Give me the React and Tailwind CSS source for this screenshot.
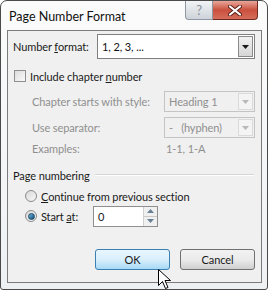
import React from "react";

function Arrow({ disabled }) {
  return (
    <svg width="7" height="4" viewBox="0 0 7 4">
      <path d="M0 0 H7 L3.5 4 Z" fill={disabled ? "#b8b8b8" : "#1a1a1a"} />
    </svg>
  );
}

function Combo({ value, disabled, className }) {
  return (
    <div
      className={
        "flex items-stretch border " +
        (disabled ? "border-[#c4c4c4] bg-[#f0f0f0] text-[#8f8f8f] " : "border-[#7f7f7f] bg-white text-[#111] ") +
        className
      }
    >
      <div className="flex-1 flex items-center pl-[4px] whitespace-nowrap">{value}</div>
      <div
        className={
          "w-[15px] my-[1px] mr-[1px] flex items-center justify-center border " +
          (disabled
            ? "border-[#dadada] bg-[#f4f4f4]"
            : "border-[#8a8a8a] bg-gradient-to-b from-[#f2f2f2] to-[#d5d5d5]")
        }
      >
        <Arrow disabled={disabled} />
      </div>
    </div>
  );
}

function Radio({ checked }) {
  return (
    <div className="w-[12px] h-[12px] shrink-0 rounded-full border border-[#8a8a8a] bg-gradient-to-br from-[#d8d8d8] to-[#f8f8f8] flex items-center justify-center">
      {checked && (
        <div className="w-[7px] h-[7px] rounded-full bg-gradient-to-br from-[#6fb6e0] to-[#0d4d74] border border-[#1a4a66]" />
      )}
    </div>
  );
}

export default function App() {
  return (
    <div
      className="w-[268px] h-[290px] relative overflow-hidden bg-white text-[11px] tracking-[-0.1px] leading-none whitespace-nowrap"
      style={{ fontFamily: 'Lato, "Noto Sans", sans-serif' }}
    >
      <div className="w-[268px] h-[290px] border border-[#4a4a4a] rounded-t-[7px] rounded-b-[3px] bg-gradient-to-b from-[#fbfbfb] to-[#eef1f4] flex flex-col pl-[6px] pr-[5px] pb-[6px]">
        {/* title bar */}
        <div className="h-[29px] flex items-start shrink-0">
          <div className="pt-[10px] pl-[2px] text-[12.5px] tracking-normal text-[#111]">Page Number Format</div>
          <div className="ml-auto mr-[4px] flex h-[19px]">
            <div className="w-[28px] h-[19px] border border-t-0 border-[#8d98a3] rounded-bl-[4px] bg-gradient-to-b from-[#f2f4f6] to-[#cdd3d9] flex items-center justify-center text-[#8a8f95] text-[13px]">
              ?
            </div>
            <div className="w-[45px] h-[19px] border border-t-0 border-l-0 border-[#6e2a22] rounded-br-[4px] bg-gradient-to-b from-[#e8a59a] via-[#c9503d] to-[#d56d5c] flex items-center justify-center">
              <svg width="14" height="11" viewBox="0 0 14 11">
                <path d="M2 1.5 L12 9.5 M12 1.5 L2 9.5" stroke="#5a1f1a" strokeWidth="4" strokeLinecap="round" />
                <path d="M2 1.5 L12 9.5 M12 1.5 L2 9.5" stroke="#ffffff" strokeWidth="2.2" strokeLinecap="round" />
              </svg>
            </div>
          </div>
        </div>
        {/* client */}
        <div className="flex-1 border border-[#7b7b7b] bg-[#f0f0f0] flex flex-col text-[#1a1a1a] pl-[5px] pr-[6px]">
          <div className="flex items-center mt-[3px] h-[25px]">
            <div className="w-[84px]">
              Number <span className="underline">f</span>ormat:
            </div>
            <Combo value="1, 2, 3, ..." className="w-[158px] h-[25px]" />
          </div>
          <div className="flex items-center mt-[10px] pl-[1px] h-[14px]">
            <div className="w-[12px] h-[12px] border border-[#8e8f8f] bg-gradient-to-br from-[#dcdcdc] to-[#fafafa]" />
            <div className="ml-[4px]">
              Include chapter <span className="underline">n</span>umber
            </div>
          </div>
          <div className="flex items-center mt-[8px] pl-[19px] text-[#8f8f8f] h-[21px]">
            <div className="w-[132px]">Chapter starts with style:</div>
            <Combo value="Heading 1" disabled className="w-[91px] h-[21px]" />
          </div>
          <div className="flex items-center mt-[5px] pl-[19px] text-[#8f8f8f] h-[21px]">
            <div className="w-[132px]">Use separator:</div>
            <Combo value={<span>-&nbsp;&nbsp;&nbsp;(hyphen)</span>} disabled className="w-[91px] h-[21px]" />
          </div>
          <div className="flex items-center mt-[3px] pl-[19px] text-[#8f8f8f] h-[14px]">
            <div className="w-[134px]">Examples:</div>
            <div>1-1, 1-A</div>
          </div>
          <div className="flex items-center mt-[13px] h-[14px]">
            <div>Page numbering</div>
            <div className="flex-1 ml-[5px] mr-[1px] border-t border-[#d5d5d5] border-b-white border-b" />
          </div>
          <div className="flex items-center mt-[4px] pl-[12px] h-[20px]">
            <Radio />
            <div className="ml-[4px]">
              <span className="underline">C</span>ontinue from previous section
            </div>
          </div>
          <div className="flex items-center pl-[12px] h-[20px]">
            <Radio checked />
            <div className="ml-[4px] w-[52px]">
              Start <span className="underline">a</span>t:
            </div>
            <div className="w-[65px] h-[21px] border border-[#8f8f8f] bg-white flex">
              <div className="flex-1 flex items-center pl-[4px]">0</div>
              <div className="w-[14px] flex flex-col border-l border-[#d0d0d0] bg-[#f0f0f0]">
                <div className="flex-1 flex items-center justify-center border-b border-[#c8c8c8]">
                  <svg width="7" height="4" viewBox="0 0 7 4"><path d="M0 4 H7 L3.5 0 Z" fill="#6a7f96" /></svg>
                </div>
                <div className="flex-1 flex items-center justify-center">
                  <svg width="7" height="4" viewBox="0 0 7 4"><path d="M0 0 H7 L3.5 4 Z" fill="#6a7f96" /></svg>
                </div>
              </div>
            </div>
          </div>
          <div className="flex mt-[23px] justify-end gap-[10px]">
            <div className="w-[75px] h-[21px] rounded-[3px] border border-[#3c7fb1] bg-gradient-to-b from-[#eaf6fd] via-[#d9f0fc] to-[#a7d9f5] flex items-center justify-center">
              OK
            </div>
            <div className="w-[75px] h-[21px] rounded-[3px] border border-[#707070] bg-gradient-to-b from-[#f2f2f2] via-[#ebebeb] to-[#cfcfcf] flex items-center justify-center">
              Cancel
            </div>
          </div>
        </div>
      </div>
      {/* mouse cursor */}
      <svg className="absolute left-[158px] top-[269px]" width="14" height="22" viewBox="0 0 14 22">
        <path d="M0.5 0.5 L0.5 16.5 L4.5 12.5 L7.5 19.5 L10 18.5 L7 11.5 L12.5 11.5 Z" fill="white" stroke="black" strokeWidth="1" strokeLinejoin="miter" />
      </svg>
    </div>
  );
}
